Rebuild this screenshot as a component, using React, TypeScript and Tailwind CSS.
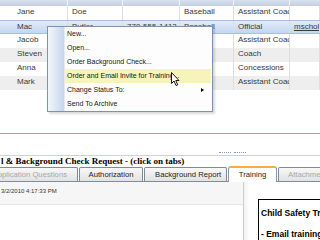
import React from 'react';

interface Volunteer {
  first: string;
  last: string;
  phone: string;
  sport: string;
  role: string;
  email: string;
  selected?: boolean;
}

const volunteers: Volunteer[] = [
  { first: 'Jane', last: 'Doe', phone: '', sport: 'Baseball', role: 'Assistant Coach', email: '' },
  { first: 'Mac', last: 'Butler', phone: '770-555-1413', sport: 'Baseball', role: 'Official', email: 'mscholz@mail.com', selected: true },
  { first: 'Jacob', last: '', phone: '', sport: '', role: 'Assistant Coach', email: '' },
  { first: 'Steven', last: '', phone: '', sport: '', role: 'Coach', email: '' },
  { first: 'Anna', last: '', phone: '', sport: '', role: 'Concessions', email: '' },
  { first: 'Mark', last: '', phone: '', sport: '', role: 'Assistant Coach', email: '' },
];

const menuItems = [
  'New...',
  'Open...',
  'Order Background Check...',
  'Order and Email Invite for Training...',
  'Change Status To:',
  'Send To Archive',
];

const cell = 'h-full shrink-0 overflow-hidden whitespace-nowrap border-r border-[#dedede] pl-[4px]';

function GridRow({ row, index }: { row: Volunteer; index: number }) {
  const bg = row.selected
    ? 'bg-gradient-to-b from-[#e3ecf8] to-[#c3d6f0] border-y border-[#a6bfe2]'
    : index % 2 === 1
      ? 'bg-[#eeeeee]'
      : 'bg-white';
  return (
    <div className={`flex h-[14px] leading-[12px] text-[8px] text-[#3a3a3a] ${bg}`}>
      <div className="h-full w-[13px] shrink-0" />
      <div className={`${cell} w-[55px]`}>{row.first}</div>
      <div className={`${cell} w-[55px]`}>{row.last}</div>
      <div className={`${cell} w-[57px]`}>{row.phone}</div>
      <div className={`${cell} w-[54px]`}>{row.sport}</div>
      <div className={`${cell} w-[56px]`}>{row.role}</div>
      <div className={`${cell} flex-1`}>
        {row.email && <span className="underline">{row.email}</span>}
      </div>
    </div>
  );
}

function Tab({ label, width, active, disabled, extra }: { label: string; width: string; active?: boolean; disabled?: boolean; extra?: string }) {
  if (active) {
    return (
      <div className={`${width} h-[16px] shrink-0 flex items-center justify-center rounded-t-[3px] border-x border-t-2 border-x-[#8b97a6] border-t-[#f0b03c] bg-white text-[7.7px] text-[#1e1e1e] -mb-px`}>
        {label}
      </div>
    );
  }
  return (
    <div className={`${width} h-[14px] shrink-0 flex items-center rounded-t-[2px] border-x border-t border-[#7d8a9a] bg-gradient-to-b from-[#f8f8f8] to-[#e2e2e2] text-[7.7px] ${disabled ? 'text-[#a8a8a8]' : 'text-[#1e1e1e]'} ${extra ?? 'justify-center'}`}>
      {label}
    </div>
  );
}

export default function App() {
  return (
    <div className="relative w-[320px] h-[240px] overflow-hidden bg-white font-['Liberation_Sans',Arial,sans-serif]">
      {/* volunteer grid */}
      <div className="h-[133px]">
        <div className="flex h-[6px] bg-gradient-to-b from-[#d8e2ef] to-[#c2d0e3]">
          <div className="w-[13px]" />
          <div className="w-[55px] border-r border-[#eef3f9]" />
          <div className="w-[55px] border-r border-[#eef3f9]" />
          <div className="w-[57px] border-r border-[#eef3f9]" />
          <div className="w-[54px] border-r border-[#eef3f9]" />
          <div className="w-[56px] border-r border-[#eef3f9]" />
          <div className="flex-1" />
        </div>
        {volunteers.map((v, i) => (
          <GridRow key={v.first} row={v} index={i} />
        ))}
      </div>
      <div className="h-px bg-[#8ea6ca]" />
      <div className="h-[16px]" />

      {/* splitter */}
      <div className="flex h-[6px] items-start justify-start border-b border-[#c6d2e6] pl-[219px] pt-[2px] gap-[3px]">
        <div className="w-[12px] border-t border-dotted border-[#8796ad]" />
        <div className="w-[12px] border-t border-dotted border-[#8796ad]" />
      </div>

      <div className="h-[10px] whitespace-nowrap pl-[1px] font-['Liberation_Serif',serif] text-[9px] font-bold leading-[10px] text-black">
        l &amp; Background Check Request - (click on tabs)
      </div>

      {/* tabs */}
      <div className="flex h-[16px] items-end gap-[1px] border-b border-[#7f8c9c] -ml-[20px]">
        <Tab label="Application Questions" width="w-[98px]" disabled extra="justify-end pr-[10px]" />
        <Tab label="Authorization" width="w-[64px]" />
        <Tab label="Background Report" width="w-[83px]" extra="justify-start pl-[10px]" />
        <Tab label="Training" width="w-[49px]" active />
        <Tab label="Attachments" width="w-[70px]" disabled extra="justify-start pl-[9px]" />
      </div>

      {/* tab content */}
      <div className="flex h-[58px]">
        <div className="w-[243px] shrink-0">
          <div className="h-[23px] border-b border-[#e6e6e6] bg-[#f6f6f6] pl-[1px] text-[6px] leading-[18px] text-[#333]">
            3/2/2010 4:17:33 PM
          </div>
        </div>
        <div className="flex-1 border-l border-[#cdcdcd] bg-gradient-to-r from-[#f2f2f2] to-white to-[6px] pl-[14px] pt-[17px]">
          <div className="h-[60px] w-[120px] border border-black pl-[2px] pt-[8px] text-[8.5px] font-bold leading-[10px] text-black whitespace-nowrap">
            <div>Child Safety Training</div>
            <div className="mt-[11px]">- Email training invite</div>
          </div>
        </div>
      </div>

      {/* context menu */}
      <div className="absolute left-[47px] top-[26px] flex w-[166px] border border-[#7f91ab] bg-[#fdfdfd] shadow-[2px_2px_2px_rgba(0,0,0,0.15)]">
        <div className="w-[17px] shrink-0 border-r border-[#e4eaf3] bg-gradient-to-r from-[#f4f7fb] to-[#c6d5eb]" />
        <div className="flex-1 pr-[1px]">
          {menuItems.map((item, i) => (
            <div
              key={item}
              className={`relative flex h-[14px] items-center whitespace-nowrap pl-[2px] text-[7px] text-[#161616] ${i === 3 ? 'bg-[#f6f3bb]' : ''}`}
            >
              {item}
              {i === 4 && (
                <span className="absolute right-[7px] top-[5px] h-0 w-0 border-y-[2.5px] border-l-[3px] border-y-transparent border-l-black" />
              )}
            </div>
          ))}
        </div>
      </div>

      {/* mouse pointer */}
      <svg className="absolute left-[171px] top-[72px]" width="10" height="15" viewBox="0 0 10 15">
        <path d="M0.5 0.5 L0.5 11.5 L3 9 L5 13.5 L6.7 12.8 L4.8 8.5 L8 8.5 Z" fill="white" stroke="black" strokeWidth="0.9" strokeLinejoin="round" />
      </svg>
    </div>
  );
}
